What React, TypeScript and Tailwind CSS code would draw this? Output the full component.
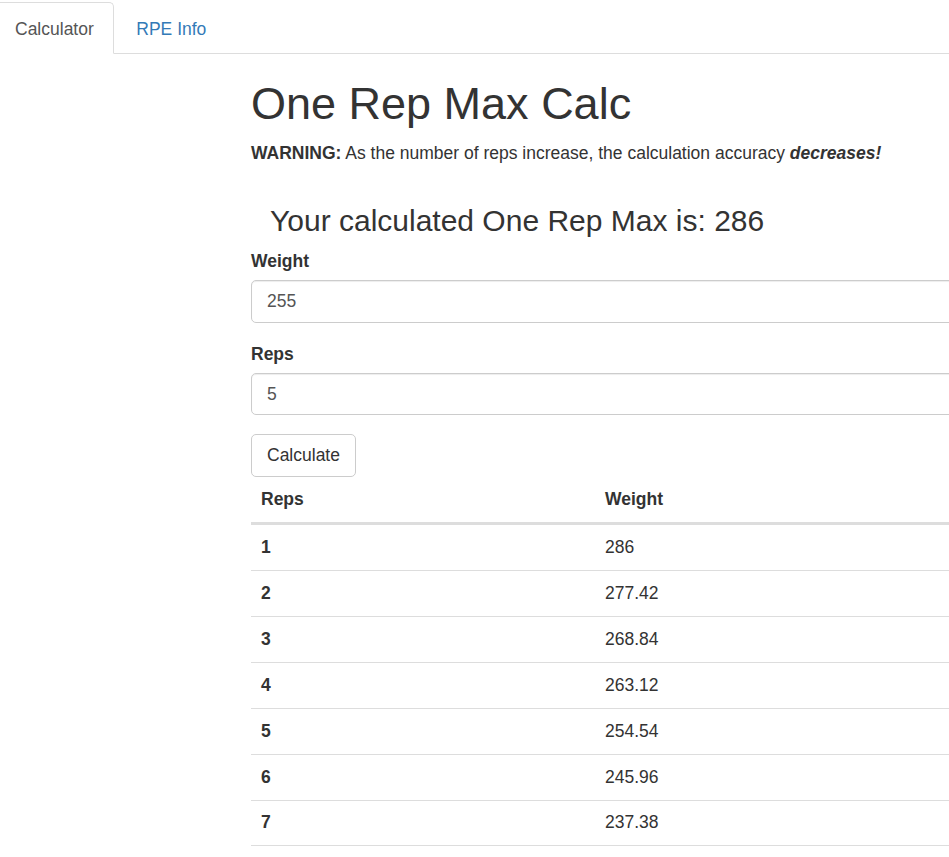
const rows = [
  { reps: 1, weight: "286" },
  { reps: 2, weight: "277.42" },
  { reps: 3, weight: "268.84" },
  { reps: 4, weight: "263.12" },
  { reps: 5, weight: "254.54" },
  { reps: 6, weight: "245.96" },
  { reps: 7, weight: "237.38" },
];

const App = () => {
  return (
    <main
      className="h-screen w-full overflow-hidden bg-white text-[#333] text-[17.5px] leading-[25px]"
      style={{ fontFamily: '"Liberation Sans", Arial, sans-serif' }}
    >
      {/* tabs */}
      <nav className="flex items-end h-[54px] border-b border-[#ddd]">
        <div className="ml-[-5px] mb-[-1px] h-[52px] pt-[2px] px-[19px] flex items-center border border-[#ddd] border-b-white rounded-t-[5px] bg-white text-[#555]">
          Calculator
        </div>
        <div className="ml-[2.5px] h-[51px] pt-[3px] px-[20px] flex items-center text-[#337ab7]">
          RPE Info
        </div>
      </nav>

      <section className="ml-[251px] w-[760px]">
        <h1 className="mt-[25px] mb-[12.5px] text-[45px] leading-[49.5px] font-normal">
          One Rep Max Calc
        </h1>
        <p className="mb-[12.5px]">
          <b>WARNING:</b> As the number of reps increase, the calculation accuracy{" "}
          <b>
            <i>decreases!</i>
          </b>
        </p>
        <h3 className="ml-[19px] mt-[37.5px] mb-[12.5px] text-[30px] leading-[33px] font-normal">
          Your calculated One Rep Max is: 286
        </h3>

        <div className="mb-[18.75px]">
          <label className="block font-bold mb-[6.25px]">Weight</label>
          <div className="h-[42.5px] border border-[#ccc] rounded-[5px] px-[15px] flex items-center text-[#555] shadow-[inset_0_1px_1px_rgba(0,0,0,0.075)]">
            255
          </div>
        </div>
        <div className="mb-[18.75px]">
          <label className="block font-bold mb-[6.25px]">Reps</label>
          <div className="h-[42.5px] border border-[#ccc] rounded-[5px] px-[15px] flex items-center text-[#555] shadow-[inset_0_1px_1px_rgba(0,0,0,0.075)]">
            5
          </div>
        </div>
        <button className="h-[42.5px] px-[15px] border border-[#ccc] rounded-[5px] bg-white text-[#333]">
          Calculate
        </button>

        <div>
          <div className="flex h-[47px] items-center border-b-2 border-[#ddd] font-bold">
            <div className="w-[344px] pl-[10px]">Reps</div>
            <div className="pl-[10px]">Weight</div>
          </div>
          {rows.map((r) => (
            <div
              key={r.reps}
              className="flex h-[46px] items-center border-t border-[#ddd] first:border-t-0 last:border-b"
            >
              <div className="w-[344px] pl-[10px] font-bold">{r.reps}</div>
              <div className="pl-[10px]">{r.weight}</div>
            </div>
          ))}
        </div>
      </section>
    </main>
  );
};

export default App;
